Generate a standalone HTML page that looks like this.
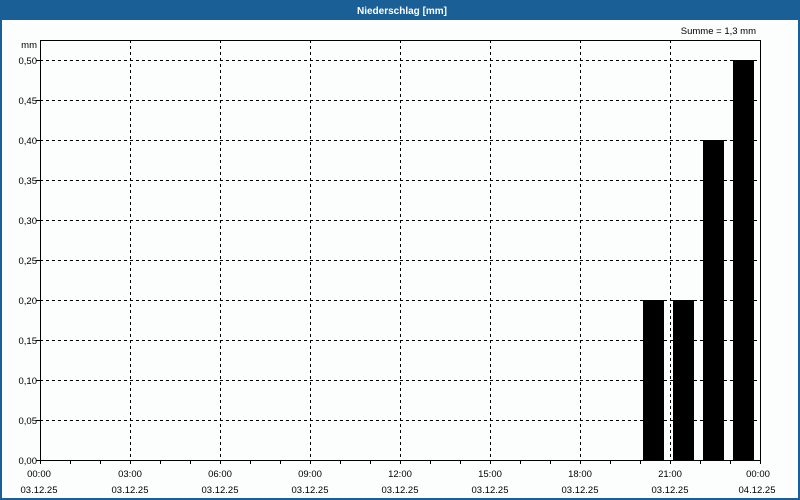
<!DOCTYPE html>
<html><head><meta charset="utf-8"><style>
html,body{margin:0;padding:0;background:#fcfdfd;}
svg{display:block;font-family:"Liberation Sans",sans-serif;}
</style></head><body>
<svg width="800" height="500" xmlns="http://www.w3.org/2000/svg">
<rect x="0" y="0" width="800" height="500" fill="#fcfdfd"/>
<rect x="0" y="0" width="800" height="20" fill="#1b5f97"/>
<rect x="0" y="0" width="2" height="500" fill="#1b5f97"/>
<rect x="798" y="0" width="2" height="500" fill="#1b5f97"/>
<rect x="0" y="498" width="800" height="2" fill="#1b5f97"/>
<text x="402" y="14" fill="#fff" font-size="10" font-weight="bold" text-anchor="middle">Niederschlag [mm]</text>
<text x="756" y="34" fill="#000" font-size="9.5" text-anchor="end">Summe = 1,3 mm</text>
<text x="37" y="48" fill="#000" font-size="9.5" text-anchor="end">mm</text>
<g stroke="#000" stroke-width="1" stroke-dasharray="3,3" shape-rendering="crispEdges">
<line x1="40" y1="60.5" x2="760" y2="60.5"/><line x1="40" y1="100.5" x2="760" y2="100.5"/>
<line x1="40" y1="140.5" x2="760" y2="140.5"/><line x1="40" y1="180.5" x2="760" y2="180.5"/>
<line x1="40" y1="220.5" x2="760" y2="220.5"/><line x1="40" y1="260.5" x2="760" y2="260.5"/>
<line x1="40" y1="300.5" x2="760" y2="300.5"/><line x1="40" y1="340.5" x2="760" y2="340.5"/>
<line x1="40" y1="380.5" x2="760" y2="380.5"/><line x1="40" y1="420.5" x2="760" y2="420.5"/>
<line x1="130.5" y1="40" x2="130.5" y2="460"/><line x1="220.5" y1="40" x2="220.5" y2="460"/>
<line x1="310.5" y1="40" x2="310.5" y2="460"/><line x1="400.5" y1="40" x2="400.5" y2="460"/>
<line x1="490.5" y1="40" x2="490.5" y2="460"/><line x1="580.5" y1="40" x2="580.5" y2="460"/>
<line x1="670.5" y1="40" x2="670.5" y2="460"/>
</g>
<g fill="#000">
<rect x="643" y="300" width="21" height="160"/>
<rect x="673" y="300" width="21" height="160"/>
<rect x="703" y="140" width="21" height="320"/>
<rect x="733" y="60" width="21" height="400"/>
</g>
<rect x="40.5" y="40.5" width="720" height="420" fill="none" stroke="#000" stroke-width="1" shape-rendering="crispEdges"/>
<g stroke="#000" shape-rendering="crispEdges">
<path d="M36 60.5h4M36 100.5h4M36 140.5h4M36 180.5h4M36 220.5h4M36 260.5h4M36 300.5h4M36 340.5h4M36 380.5h4M36 420.5h4M36 460.5h4"/>
<path d="M40.5 460v4M70.5 460v4M100.5 460v4M130.5 460v4M160.5 460v4M190.5 460v4M220.5 460v4M250.5 460v4M280.5 460v4M310.5 460v4M340.5 460v4M370.5 460v4M400.5 460v4M430.5 460v4M460.5 460v4M490.5 460v4M520.5 460v4M550.5 460v4M580.5 460v4M610.5 460v4M640.5 460v4M670.5 460v4M700.5 460v4M730.5 460v4M760.5 460v4"/>
</g>
<g font-size="9.5" fill="#000" text-anchor="end">
<text x="37" y="64">0,50</text><text x="37" y="104">0,45</text><text x="37" y="144">0,40</text>
<text x="37" y="184">0,35</text><text x="37" y="224">0,30</text><text x="37" y="264">0,25</text>
<text x="37" y="304">0,20</text><text x="37" y="344">0,15</text><text x="37" y="384">0,10</text>
<text x="37" y="424">0,05</text><text x="37" y="464">0,00</text>
</g>
<g font-size="9.5" fill="#000" text-anchor="middle">
<text x="39" y="477">00:00</text><text x="39" y="493">03.12.25</text>
<text x="130" y="477">03:00</text><text x="130" y="493">03.12.25</text>
<text x="220" y="477">06:00</text><text x="220" y="493">03.12.25</text>
<text x="310" y="477">09:00</text><text x="310" y="493">03.12.25</text>
<text x="400" y="477">12:00</text><text x="400" y="493">03.12.25</text>
<text x="490" y="477">15:00</text><text x="490" y="493">03.12.25</text>
<text x="580" y="477">18:00</text><text x="580" y="493">03.12.25</text>
<text x="670" y="477">21:00</text><text x="670" y="493">03.12.25</text>
<text x="758" y="477">00:00</text><text x="757" y="493">04.12.25</text>
</g>
</svg>
</body></html>
